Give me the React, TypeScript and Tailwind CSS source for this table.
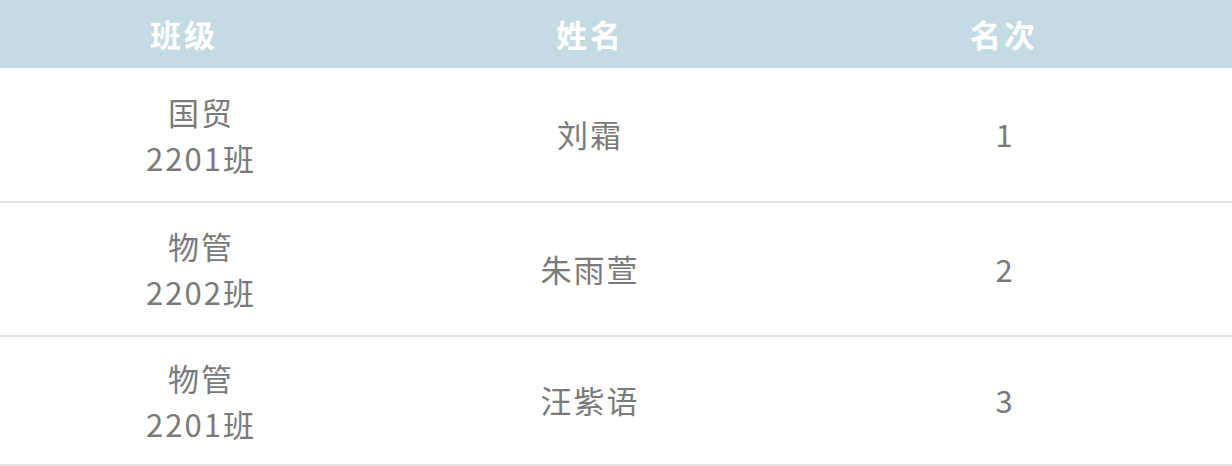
import React from "react";

const rows = [
    { cls: ["国贸", "2201班"], name: "刘霜", rank: "1", h: "h-[135px]" },
    { cls: ["物管", "2202班"], name: "朱雨萱", rank: "2", h: "h-[134px]" },
    { cls: ["物管", "2201班"], name: "汪紫语", rank: "3", h: "h-[129px]" },
];

export default function App() {
    return (
        <div className="w-[1232px] h-[466px] bg-white font-['Noto_Sans_CJK_SC',sans-serif]">
            <div className="grid grid-cols-[368px_444px_384px] h-[68px] bg-[#c5dbe3] items-center text-white font-bold text-[31px] tracking-[3px]">
                <div className="text-center">班级</div>
                <div className="text-center">姓名</div>
                <div className="text-center">名次</div>
            </div>
            {rows.map((r, i) => (
                <div
                    key={i}
                    className={`grid grid-cols-[402px_376px_1fr] ${r.h} items-center border-b-2 border-[#e3e3e3] text-[#7a7a7a] text-[31px] tracking-[2px]`}
                >
                    <div className="text-center leading-[46px]">
                        <div>{r.cls[0]}</div>
                        <div>{r.cls[1]}</div>
                    </div>
                    <div className="text-center">{r.name}</div>
                    <div className="text-center">{r.rank}</div>
                </div>
            ))}
        </div>
    );
}
